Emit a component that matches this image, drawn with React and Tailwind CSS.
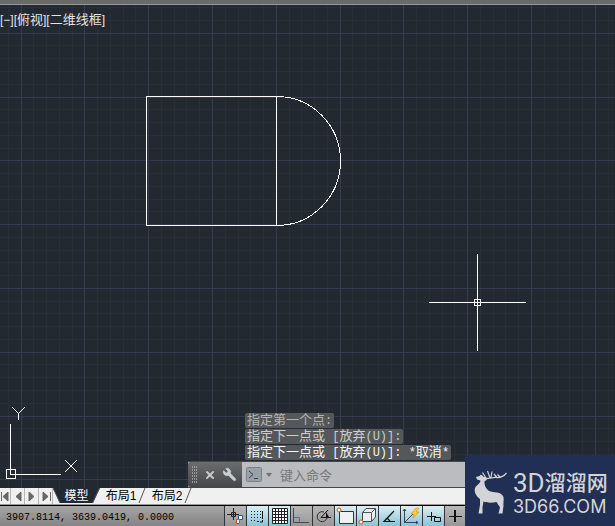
import { X, Wrench } from 'lucide-react';

const CELL = 63.8;
const steps = (origin, count) =>
  Array.from({ length: count * 5 }, (_, i) => ({
    pos: Math.floor(origin + (i * CELL) / 5) + 0.5,
    major: i % 5 === 0,
  }));

const columns = steps(21.1 - CELL, 40);
const rows = steps(28.2 - CELL, 30);

const Grid = () => (
  <g shapeRendering="crispEdges">
    {[false, true].map((major) => (
      <g key={String(major)} stroke={major ? '#353b50' : '#282f3a'}>
        {columns.filter((c) => c.major === major).map((c) => (
          <line key={`c${c.pos}`} x1={c.pos} x2={c.pos} y1="0" y2="2000" />
        ))}
        {rows.filter((r) => r.major === major).map((r) => (
          <line key={`r${r.pos}`} y1={r.pos} y2={r.pos} x1="0" x2="3000" />
        ))}
      </g>
    ))}
  </g>
);

const Drawing = () => (
  <svg className="absolute inset-0 h-full w-full" fill="none" aria-hidden="true">
    <Grid />
    <g stroke="#fff" shapeRendering="crispEdges">
      <path d="M146.5 91.5H276.5V220.5H146.5Z" />
      <path d="M276.5 91.5A64 64.5 0 0 1 276.5 220.5" />
      <path d="M429 297.5H526M477.5 249V346" />
      <path d="M474.5 294.5H480.5V300.5H474.5Z" />
    </g>
  </svg>
);

const AxisIcon = () => (
  <svg className="absolute bottom-0 left-1 h-20 w-20 overflow-visible" viewBox="0 0 80 80" fill="none" stroke="#fff" shapeRendering="crispEdges" aria-hidden="true">
    <path d="M2.5 61.5H11.5V70.5H2.5Z M6.5 16V66.5H57" />
    <path d="M8 -1L14.5 5.5L21 -1M14.5 5.5V12M61 52L73 64M73 52L61 64" />
  </svg>
);

// Han characters are set one size larger than the latin ones around them
const MixedText = ({ text }) =>
  text.split(/([\u4e00-\u9fff]+)/).map((part, i) => (
    <span key={i} className={i % 2 ? 'text-[13px]' : 'text-[12px]'}>{part}</span>
  ));

const history = [
  { text: '指定第一个点:', tone: 'text-[#b4b4b4]' },
  { text: '指定下一点或 [放弃(U)]:', tone: 'text-[#cccccc]' },
  { text: '指定下一点或 [放弃(U)]: *取消*', tone: 'text-[#f4f4f4]' },
];

const CommandLine = () => (
  <div className="absolute right-0 bottom-0 left-[188px]">
    <ol className="ml-[57px] flex flex-col items-start">
      {history.map((line) => (
        <li key={line.text} className={`mb-px h-[15px] rounded-xs bg-[#55585b] px-0.5 font-['Liberation_Mono','Noto_Sans_CJK_SC',monospace] text-[12px] leading-4 whitespace-pre ${line.tone}`}>
          <MixedText text={line.text} />
        </li>
      ))}
    </ol>
    <div className="flex h-[27px] border-y border-[#44484c] bg-[#bbbcbf]">
      <div className="flex w-[54px] items-center gap-1.5 rounded-l-xs bg-linear-to-b from-[#6b6c6d] to-[#454749] pl-1">
        <svg className="h-[17px] w-[6px]" viewBox="0 0 6 17" fill="#999" aria-hidden="true">
          {[0, 3, 6, 9, 12, 15].map((y) => (
            <path key={y} d={`M0 ${y}h1v2h-1zM2 ${y}h1v2h-1zM4 ${y}h1v2h-1z`} />
          ))}
        </svg>
        <button aria-label="关闭" className="text-[#c8c8c8]"><X size={12} strokeWidth={4} /></button>
        <button aria-label="自定义" className="text-[#c9ced3]"><Wrench size={15} fill="currentColor" strokeWidth={1} className="-scale-x-100" /></button>
      </div>
      <button aria-label="最近使用的命令" className="flex items-center gap-1 pl-1">
        <svg width="16" height="15" viewBox="0 0 16 15" fill="none" aria-hidden="true">
          <rect x="0.5" y="0.5" width="15" height="14" rx="1" fill="#98a0a8" stroke="#78818a" />
          <path d="M3 4L7 7.5L3 11M8 11.5H12" stroke="#343c44" />
        </svg>
        <svg width="6" height="4" viewBox="0 0 6 4" fill="#6e7073" aria-hidden="true"><path d="M0 0H6L3 4Z" /></svg>
      </button>
      <input
        aria-label="命令"
        placeholder="键入命令"
        className="min-w-0 flex-1 pl-2 font-['Noto_Sans_CJK_SC',sans-serif] text-[13px] text-[#333] outline-none placeholder:text-[#77787b]"
      />
    </div>
  </div>
);

const navButtons = [
  { label: '第一个', d: 'M1.5 3V12M8 3V12L3 7.5Z' },
  { label: '上一个', d: 'M10 3V12L5 7.5Z' },
  { label: '下一个', d: 'M4 3V12L9 7.5Z' },
  { label: '最后一个', d: 'M4 3V12L9 7.5ZM11.5 3V12' },
];

const layouts = ['布局1', '布局2'];

const LayoutTabs = () => (
  <nav className="flex h-[17px] border-b border-[#999] bg-[#f0f0f0] font-['Liberation_Sans','Noto_Sans_CJK_SC',sans-serif] text-[12px] leading-4 text-black">
    {navButtons.map((b) => (
      <button key={b.label} aria-label={b.label} className="w-[14px] overflow-hidden border-r border-[#b5b5b5] first:w-[11px]">
        <svg className="h-[15px] w-[13px] max-w-none" viewBox="0 0 13 15" fill="#666" stroke="#666" strokeWidth="1" aria-hidden="true">
          <path d={b.d} />
        </svg>
      </button>
    ))}
    <button className="relative h-[15px] w-[47px] text-center text-white">
      <svg className="absolute inset-0 h-[15px] w-[47px]" viewBox="0 0 47 15" aria-hidden="true">
        <path d="M0 0H47L40 15H7Z" fill="#222931" />
        <path d="M0 0L7 15M46.500 0L39.500 15" stroke="#555" />
      </svg>
      <span className="relative">模型</span>
    </button>
    {layouts.map((name) => (
      <button key={name} className="flex h-[15px] w-[46px] pl-1 whitespace-nowrap">
        <span className="w-[34px]">{name}</span>
        <svg className="h-[15px] w-[8px] shrink-0" viewBox="0 0 8 15" fill="none" stroke="#555" aria-hidden="true"><path d="M7 0L1 15" /></svg>
      </button>
    ))}
  </nav>
);

const toggles = [
  { label: '推断约束', on: false, art: <><path d="M2 8.500H14M8.500 2V14M6.500 6.500H10.500V10.500H6.500Z" stroke="#222" /><path d="M13.500 9.500H17.500V13.500H13.500Z" stroke="#155fa8" fill="#fff" /><path d="M11.500 13.500H14.500V17.500H11.500Z" stroke="#d45117" fill="#fff" /></> },
  { label: '捕捉', on: true, art: <><path d="M4 5.500H14M4 8.500H14M4 11.500H14M4 14.500H10" stroke="#222" strokeDasharray="1 2" /><path d="M10 15.500H12M15.500 5V13M15.500 14V16H13" stroke="#111" /></> },
  { label: '栅格', on: true, art: <path d="M3.500 2.500H18.500V17.500H3.500ZM6.500 2V18M9.500 2V18M12.500 2V18M15.500 2V18M3 5.500H19M3 8.500H19M3 11.500H19M3 14.500H19" stroke="#222" fill="#fff" /> },
  { label: '正交', on: false, art: <><path d="M2.500 2V16.500H18" stroke="#444" /><path d="M3 11.500H8.500V16" stroke="#56748c" /></> },
  { label: '极轴', on: false, art: <><path d="M11 6A5 5 0 1 0 14 12" stroke="#333" /><path d="M8 11.500H18M8 11.500L15 4" stroke="#111" /><path d="M13 6V12H16.500Z" fill="#111" /></> },
  { label: '对象捕捉', on: true, art: <><path d="M4.500 5.500H18.500V17.500H4.500Z" fill="#f1f1f1" stroke="#333" /><circle cx="4" cy="4" r="2" fill="#fff" stroke="#d4501c" /></> },
  { label: '三维对象捕捉', on: true, art: <><path d="M5.500 6.500L9 2.500H18.500V11L14.500 15.500H5.500Z" fill="#e9eef0" stroke="#444" /><path d="M5.500 6.500H14.500V15.500M14.500 6.500L18.500 2.500" stroke="#555" /><circle cx="4" cy="16" r="2" fill="#fff" stroke="#d4501c" /></> },
  { label: '对象追踪', on: true, art: <path d="M15 5L5 15.500H16M8 12L11 15" stroke="#111" strokeWidth="1.200" /> },
  { label: '动态 UCS', on: true, art: <><path d="M3.500 3V16.500H17M2 5L3.500 3L5 5M15 15L17 16.500L15 18M3.500 16.500L12 8" stroke="#345" /><path d="M15 2L10 8H13L12 12L18 6H15L18 2Z" fill="#ffd22c" stroke="#d17b10" strokeWidth="0.5" /></> },
  { label: '动态输入', on: true, art: <path d="M4 10.500H13M8.500 6V15M11.500 11.500H17.500V15.500H11.500Z" stroke="#111" /> },
  { label: '线宽', on: false, art: <><path d="M4 10.500H17" stroke="#111" /><path d="M10 4V16" stroke="#111" strokeWidth="2" /></> },
];

const StatusBar = () => (
  <footer className="flex h-[21px] border-t border-black bg-linear-to-b from-[#a5a5a5] to-[#858585]">
    <output className="w-[224px] pl-[6px] font-['Liberation_Mono',monospace] text-[10px] leading-[23px] whitespace-pre text-black">
      3907.8114, 3639.0419, 0.0000
    </output>
    <div className="flex border-l border-[#333]">
      {toggles.map((t) => (
        <button
          key={t.label}
          aria-label={t.label}
          aria-pressed={t.on}
          className={`w-[22px] border-r border-[#333] ${t.on ? 'bg-linear-to-b from-[#dceff3] to-[#86c4d6]' : 'bg-linear-to-b from-[#b8b8b8] to-[#979797]'}`}
        >
          <svg className="h-5 w-[21px]" viewBox="0 0 21 20" fill="none" aria-hidden="true">{t.art}</svg>
        </button>
      ))}
    </div>
  </footer>
);

const Watermark = () => (
  <div className="absolute right-0 bottom-0 flex h-[71px] w-[150px] items-center bg-[#212f55] pt-1 pl-2 font-['Roboto','Noto_Sans_CJK_SC',sans-serif] text-[#d2d4d8]">
    <svg className="h-[48px] w-[36px] shrink-0" viewBox="0 0 36 48" fill="#d2d4d8" aria-hidden="true">
      <path d="M3 8L6.500 7L8 5.500L11 8L14.500 10L11.500 12.500C11 16 13 20 16 22C21 24 27 22 30 27C31.500 30 30 33 30.500 37L29.500 44.500H25.500L27 38.500L23.500 33C19 34 14 34 10.500 32.500L9.500 38L9.500 44.500H5.500L7 36V30C2.500 27 1 23 2 19C3.500 16 7 15 7.500 11.500L4 10.500Z" />
      <path d="M11 8.500C16 11 19 8 23 8.500S31 7 33.500 4M13 9L9.500 3.500M17 9L14.500 2M18 8.500L19 2.500M24 8.500L21 5M27 8L24.500 5.500" fill="none" stroke="#d2d4d8" strokeWidth="1.200" />
    </svg>
    <div className="ml-1 whitespace-nowrap">
      <p className="flex h-7 items-center leading-7"><span className="text-[26px]">3D</span><span className="text-[21px] font-medium">溜溜网</span></p>
      <p className="font-['Inter',sans-serif] text-[18px] leading-5">3D66.COM</p>
    </div>
  </div>
);

export default function App() {
  return (
    <div className="relative flex h-screen flex-col overflow-hidden bg-[#222931]">
      <div className="h-[5px] shrink-0 border-b border-[#9a9a9a] bg-[#6a6a68]" />
      <main className="relative min-h-0 flex-1">
        <Drawing />
        <p className="absolute top-[6px] left-0 font-['Liberation_Sans','Noto_Sans_CJK_SC',sans-serif] leading-4 text-[#e4e4e4]">
          <MixedText text="[−][俯视][二维线框]" />
        </p>
        <AxisIcon />
        <CommandLine />
      </main>
      <LayoutTabs />
      <StatusBar />
      <Watermark />
    </div>
  );
}
